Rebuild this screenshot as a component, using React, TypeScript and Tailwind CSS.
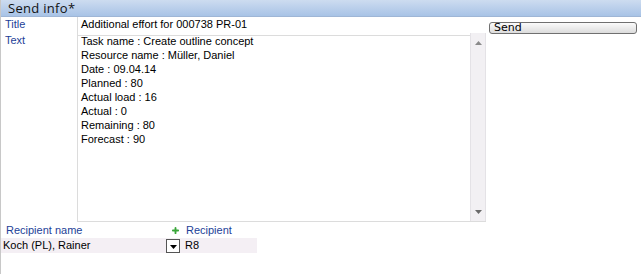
import { Plus } from "lucide-react";

const lines = [
    "Task name : Create outline concept",
    "Resource name : Müller, Daniel",
    "Date : 09.04.14",
    "Planned : 80",
    "Actual load : 16",
    "Actual : 0",
    "Remaining : 80",
    "Forecast : 90",
];

export default function App() {
    return (
        <div className="w-[641px] h-[274px] bg-white border-l border-[#c8c8c8] font-['Liberation_Sans',Arial,sans-serif] text-[11px] text-black overflow-hidden">
            {/* Header */}
            <div className="h-[17px] bg-gradient-to-b from-[#cddcf0] to-[#a8c3e6] border-b border-[#9fb6d6] pl-[7px] text-[13px] tracking-[0.3px] leading-[17px] text-[#111] font-['Open_Sans',sans-serif]">
                Send info*
            </div>

            {/* Title row */}
            <div className="grid grid-cols-[76px_409px_1fr] h-[16px]">
                <div className="pl-[4px] leading-[14px] text-[#1d3f98]">Title</div>
                <div className="border-l border-b border-[#dcdcdc] pl-[3px] leading-[15px]">Additional effort for 000738 PR-01</div>
                <div className="pl-[3px] pr-[4px] pt-[2px]">
                    <button className="w-full h-[12px] rounded-[3px] border border-[#707070] bg-gradient-to-b from-[#fbfbfb] to-[#dcdcdc] text-left pl-[4px] text-[11px] leading-[10px] font-['DejaVu_Sans',sans-serif]">
                        Send
                    </button>
                </div>
            </div>

            {/* Text row */}
            <div className="grid grid-cols-[76px_409px_1fr] h-[189px]">
                <div className="pl-[4px] leading-[14px] text-[#1d3f98]">Text</div>
                <div className="border-l border-b border-[#dcdcdc] flex">
                    <div className="flex-1 pl-[3px] leading-[14px] pt-[1px]">
                        {lines.map((l) => (
                            <div key={l}>{l}</div>
                        ))}
                    </div>
                    <div className="w-[16px] bg-[#f2f0f3] border-l border-r border-[#e4e2e6] flex flex-col items-center justify-between pt-[8px] pb-[7px]">
                        <svg width="7" height="4" viewBox="0 0 7 4"><path d="M3.5 0L7 4H0z" fill="#8a8a8a" /></svg>
                        <svg width="7" height="4" viewBox="0 0 7 4"><path d="M0 0H7L3.5 4z" fill="#6a6a6a" /></svg>
                    </div>
                </div>
                <div />
            </div>

            {/* Recipients */}
            <div className="w-[256px] mt-[1px]">
                <div className="grid grid-cols-[165px_18px_1fr] h-[15px] leading-[15px] text-[#1d3f98]">
                    <div className="pl-[5px]">Recipient name</div>
                    <div className="flex items-center justify-center">
                        <Plus className="w-[9px] h-[9px] text-[#3aa63a]" strokeWidth={5} />
                    </div>
                    <div className="pl-[2px]">Recipient</div>
                </div>
                <div className="grid grid-cols-[165px_18px_1fr] h-[15px] leading-[15px] bg-[#f4eff4]">
                    <div className="pl-[2px]">Koch (PL), Rainer</div>
                    <div className="flex items-center">
                        <div className="w-[14px] h-[14px] border border-[#555] bg-white flex items-center justify-center pt-[2px]">
                            <svg width="7" height="4" viewBox="0 0 7 4"><path d="M0 0H7L3.5 4z" fill="#000" /></svg>
                        </div>
                    </div>
                    <div className="pl-[1px]">R8</div>
                </div>
            </div>
        </div>
    );
}
